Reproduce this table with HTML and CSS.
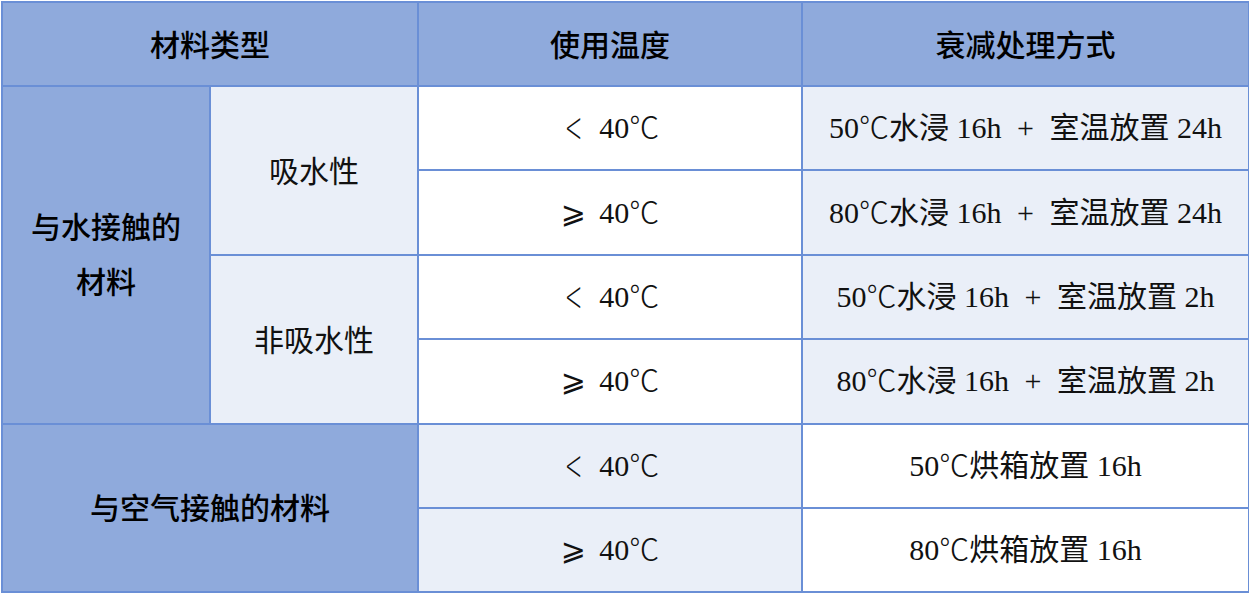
FILE: index.html
```html
<!DOCTYPE html>
<html lang="zh-CN">
<head>
<meta charset="utf-8">
<title>材料衰减处理方式</title>
<link rel="stylesheet" href="styles.css">
</head>
<body>
<table class="grid">
  <colgroup>
    <col class="c1"><col class="c2"><col class="c3"><col class="c4">
  </colgroup>
  <thead>
    <tr class="head">
      <th colspan="2">材料类型</th>
      <th>使用温度</th>
      <th>衰减处理方式</th>
    </tr>
  </thead>
  <tbody>
    <tr>
      <td rowspan="4" class="cat">与水接触的<br>材料</td>
      <td rowspan="2" class="sub">吸水性</td>
      <td class="white"><span class="lt">&lt;</span> 40<span class="deg">℃</span></td>
      <td class="light">50<span class="deg">℃</span>水浸 16h <span class="plus">+</span> 室温放置 24h</td>
    </tr>
    <tr>
      <td class="white"><span class="ge">⩾</span> 40<span class="deg">℃</span></td>
      <td class="light">80<span class="deg">℃</span>水浸 16h <span class="plus">+</span> 室温放置 24h</td>
    </tr>
    <tr>
      <td rowspan="2" class="sub">非吸水性</td>
      <td class="white"><span class="lt">&lt;</span> 40<span class="deg">℃</span></td>
      <td class="light">50<span class="deg">℃</span>水浸 16h <span class="plus">+</span> 室温放置 2h</td>
    </tr>
    <tr>
      <td class="white"><span class="ge">⩾</span> 40<span class="deg">℃</span></td>
      <td class="light">80<span class="deg">℃</span>水浸 16h <span class="plus">+</span> 室温放置 2h</td>
    </tr>
    <tr>
      <td rowspan="2" colspan="2" class="cat">与空气接触的材料</td>
      <td class="light"><span class="lt">&lt;</span> 40<span class="deg">℃</span></td>
      <td class="white">50<span class="deg">℃</span>烘箱放置 16h</td>
    </tr>
    <tr>
      <td class="light"><span class="ge">⩾</span> 40<span class="deg">℃</span></td>
      <td class="white">80<span class="deg">℃</span>烘箱放置 16h</td>
    </tr>
  </tbody>
</table>
</body>
</html>
```
FILE: styles.css
```css
html, body {
  margin: 0;
  padding: 0;
  background: #ffffff;
}

.grid {
  border-collapse: collapse;
  width: 1247px;
  table-layout: fixed;
  margin: 1px 0 0 1px;
  font-family: "Liberation Serif", "Noto Sans CJK SC", serif;
  font-size: 30px;
  color: #111;
}

.c1 { width: 208px; }
.c2 { width: 208px; }
.c3 { width: 384px; }
.c4 { width: 447px; }

.grid th,
.grid td {
  border: 2px solid #6a8fd6;
  text-align: center;
  vertical-align: middle;
  padding: 0 0 3px 0;
  height: 79.4px;
  line-height: 1.2;
  white-space: nowrap;
}

.head th {
  height: 79px;
  background: #8faadc;
  font-family: "Noto Sans CJK SC", sans-serif;
  font-weight: 500;
  font-size: 30px;
  color: #000;
}

.cat {
  background: #8faadc;
  font-family: "Noto Sans CJK SC", sans-serif;
  font-weight: 500;
  font-size: 30px;
  line-height: 55px !important;
  color: #000;
}

.sub {
  background: #eaeff8;
  font-family: "Noto Sans CJK SC", sans-serif;
  font-weight: 400;
  font-size: 30px;
}

.white { background: #ffffff; }
.light { background: #eaeff8; }

.deg {
  font-family: "Noto Sans CJK SC", sans-serif;
  font-weight: 300;
}

.lt {
  display: inline-block;
  font-family: "DejaVu Sans", sans-serif;
  font-weight: 200;
  transform: scale(0.7, 1.4);
  margin-right: 6px;
}

.ge {
  font-family: "DejaVu Sans", sans-serif;
  margin-right: 6px;
}

.plus {
  margin: 0 8px;
}
```
